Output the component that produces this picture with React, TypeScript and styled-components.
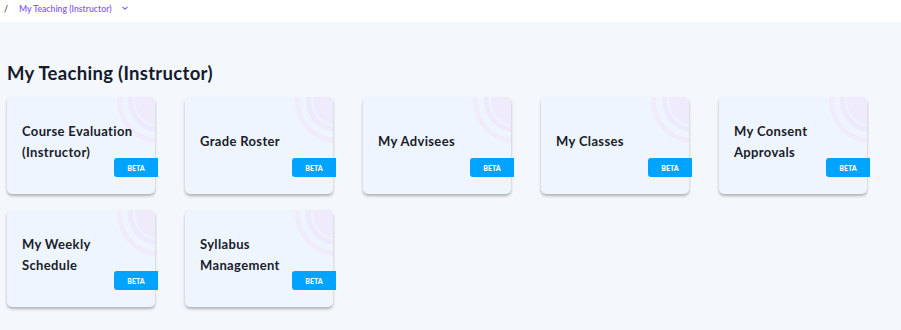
import React from "react";
import styled, { createGlobalStyle } from "styled-components";

const Global = createGlobalStyle`
  html, body { margin: 0; padding: 0; background: #f4f7fb; }
  body { font-family: Lato, "Noto Sans", sans-serif; }
`;

const TopBar = styled.header`
  height: 22px;
  background: #ffffff;
  display: flex;
  align-items: center;
  padding-left: 4px;
  box-sizing: border-box;
  font-size: 8.7px;
  font-weight: 600;
  padding-bottom: 6px;
`;

const Slash = styled.span`
  color: #333;
  margin-right: 11px;
`;

const Crumb = styled.span`
  color: #8a5cf6;
`;

const Chevron = styled.svg`
  margin-left: 9px;
  width: 8px;
  height: 8px;
`;

const Main = styled.main`
  padding: 39px 7px 20px 7px;
`;

const Title = styled.h1`
  margin: 0 0 12px 0;
  font-size: 18.5px;
  line-height: 24px;
  font-weight: 700;
  letter-spacing: 0.3px;
  color: #141a2e;
`;

const Grid = styled.div`
  display: grid;
  grid-template-columns: repeat(5, 148px);
  column-gap: 30px;
  row-gap: 16px;
`;

const Card = styled.div`
  position: relative;
  height: 97px;
  background: #eef5ff;
  border-radius: 5px;
  box-shadow: 0 2px 3px rgba(0, 0, 0, 0.28);
  display: flex;
  align-items: center;
  padding: 0 10px 8px 15px;
  box-sizing: border-box;
`;

const Deco = styled.svg`
  position: absolute;
  top: 0;
  right: 0;
  width: 60px;
  height: 60px;
  border-top-right-radius: 5px;
  pointer-events: none;
`;

const CardTitle = styled.div`
  position: relative;
  font-size: 13px;
  line-height: 21px;
  font-weight: 700;
  letter-spacing: 0.35px;
  color: #1a1c2a;
  max-width: 122px;
`;

const Badge = styled.span`
  position: absolute;
  top: 61px;
  right: -3px;
  width: 44px;
  height: 19px;
  background: #00a3ff;
  border-radius: 3px 0 0 3px;
  color: #fff;
  font-size: 7px;
  font-weight: 900;
  display: flex;
  align-items: center;
  justify-content: center;
  letter-spacing: 0.1px;
`;

const items = [
  "Course Evaluation (Instructor)",
  "Grade Roster",
  "My Advisees",
  "My Classes",
  "My Consent Approvals",
  "My Weekly Schedule",
  "Syllabus Management",
];

function Decoration() {
  return (
    <Deco viewBox="0 0 60 60">
      <circle cx="64" cy="4" r="39.5" fill="none" stroke="#f0ecfc" strokeWidth="5" />
      <circle cx="64" cy="4" r="28.5" fill="none" stroke="#eee9fc" strokeWidth="5" />
      <circle cx="64" cy="4" r="24" fill="#efeafc" />
    </Deco>
  );
}

export default function App() {
  return (
    <>
      <Global />
      <TopBar>
        <Slash>/</Slash>
        <Crumb>My Teaching (Instructor)</Crumb>
        <Chevron viewBox="0 0 8 8">
          <path d="M1.5 2.8 L4 5.2 L6.5 2.8" fill="none" stroke="#8a5cf6" strokeWidth="1.1" />
        </Chevron>
      </TopBar>
      <Main>
        <Title>My Teaching (Instructor)</Title>
        <Grid>
          {items.map((t) => (
            <Card key={t}>
              <Decoration />
              <CardTitle>{t}</CardTitle>
              <Badge>BETA</Badge>
            </Card>
          ))}
        </Grid>
      </Main>
    </>
  );
}
